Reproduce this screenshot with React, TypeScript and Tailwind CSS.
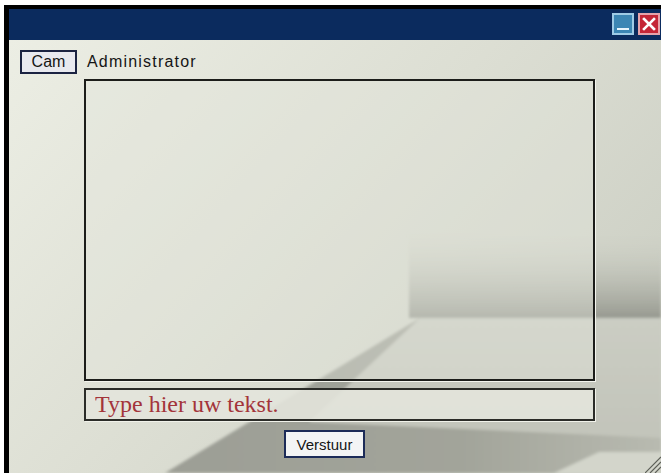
import { useState } from 'react';

function Backdrop() {
  // soft studio-style backdrop drawn behind the chat panel
  return (
    <svg className="absolute inset-0 h-full w-full" viewBox="0 0 652 433" preserveAspectRatio="none">
      <defs>
        <linearGradient id="wall" x1="0" y1="0" x2="1" y2="0.6">
          <stop offset="0" stopColor="#eceee4" />
          <stop offset="0.55" stopColor="#dcded3" />
          <stop offset="1" stopColor="#cdd0c5" />
        </linearGradient>
        <linearGradient id="shade" x1="0" y1="0" x2="0" y2="1">
          <stop offset="0" stopColor="#cfd1c7" stopOpacity="0" />
          <stop offset="1" stopColor="#979990" />
        </linearGradient>
        <linearGradient id="floor" x1="0" y1="0" x2="1" y2="0">
          <stop offset="0" stopColor="#9c9e95" />
          <stop offset="0.6" stopColor="#a2a49a" />
          <stop offset="1" stopColor="#b8bab0" />
        </linearGradient>
        <linearGradient id="top" x1="0" y1="0" x2="0" y2="1">
          <stop offset="0" stopColor="#cbcdc3" />
          <stop offset="1" stopColor="#c2c4ba" />
        </linearGradient>
        <filter id="soft">
          <feGaussianBlur stdDeviation="1.5" />
        </filter>
      </defs>
      <rect width="652" height="433" fill="url(#wall)" />
      <g filter="url(#soft)">
        <rect x="400" y="190" width="252" height="88" fill="url(#shade)" />
        <polygon points="156,433 411,278 652,278 652,433" fill="url(#floor)" />
        <polygon points="411,278 652,278 652,398 300,382" fill="url(#top)" />
        <polygon points="545,433 590,412 652,412 652,433" fill="#d3d5cb" />
      </g>
    </svg>
  );
}

export default function App() {
  const [text, setText] = useState('');

  return (
    <div className="h-[473px] w-[661px] overflow-hidden bg-white pl-[4px] pt-[5px] font-['Liberation_Sans',Arial,sans-serif]">
      <div className="flex h-full flex-col border-l-[5px] border-t-[4px] border-black">
        {/* title bar */}
        <div className="flex h-[31px] shrink-0 items-start justify-end gap-[4px] bg-[#0b2b5e] pr-[1px] pt-[4px]">
          <button className="flex h-[22px] w-[22px] items-end justify-center border-2 border-[#9fcbe6] bg-[#3c86b4] pb-[3px]">
            <span className="block h-[2px] w-[12px] bg-[#e8f4fb]" />
          </button>
          <button className="flex h-[22px] w-[22px] items-center justify-center border-2 border-[#e6a3ab] bg-[#c52637]">
            <svg width="14" height="14" viewBox="0 0 14 14">
              <path d="M2 2 L12 12 M12 2 L2 12" stroke="#ffffff" strokeWidth="2.6" strokeLinecap="square" />
            </svg>
          </button>
        </div>

        {/* body */}
        <div className="relative flex-1">
          <Backdrop />
          <div className="relative flex flex-col pl-[11px] pt-[10px]">
            <div className="flex items-center">
              <button className="h-[24px] w-[57px] border-2 border-[#1b2342] bg-[#e8e9ef] text-[16px] leading-none text-[#151515]">
                Cam
              </button>
              <span className="ml-[10px] text-[16px] tracking-[1.2px] text-[#151515]">Administrator</span>
            </div>

            <div className="ml-[64px] mt-[5px] h-[302px] w-[511px] border-2 border-[#1c1d1a] bg-[#e4e6dc]/40 shadow-[1px_1px_0_#f4f5ee]" />

            <div className="ml-[64px] mt-[7px] flex h-[33px] w-[511px] items-center border-2 border-[#2b2c28] bg-[#e3e4db]/90 shadow-[1px_1px_0_#f1f2ea]">
              <input
                value={text}
                onChange={e => setText(e.target.value)}
                placeholder="Type hier uw tekst."
                className="h-full w-full bg-transparent pl-[9px] font-['Liberation_Serif','Times_New_Roman',serif] text-[24px] text-[#a3343a] outline-none placeholder:text-[#a3343a]"
              />
            </div>

            <button className="ml-[264px] mt-[9px] h-[28px] w-[81px] border-2 border-[#1c2b58] bg-[#f3f4f5] text-[15px] leading-none text-[#151515]">
              Verstuur
            </button>
          </div>

          {/* resize grip */}
          <svg className="absolute bottom-0 right-0" width="16" height="22" viewBox="0 0 16 22">
            <path d="M16 6 L0 22 M16 11 L5 22 M16 16 L10 22" stroke="#5d5f58" strokeWidth="1.2" />
          </svg>
        </div>
      </div>
    </div>
  );
}
